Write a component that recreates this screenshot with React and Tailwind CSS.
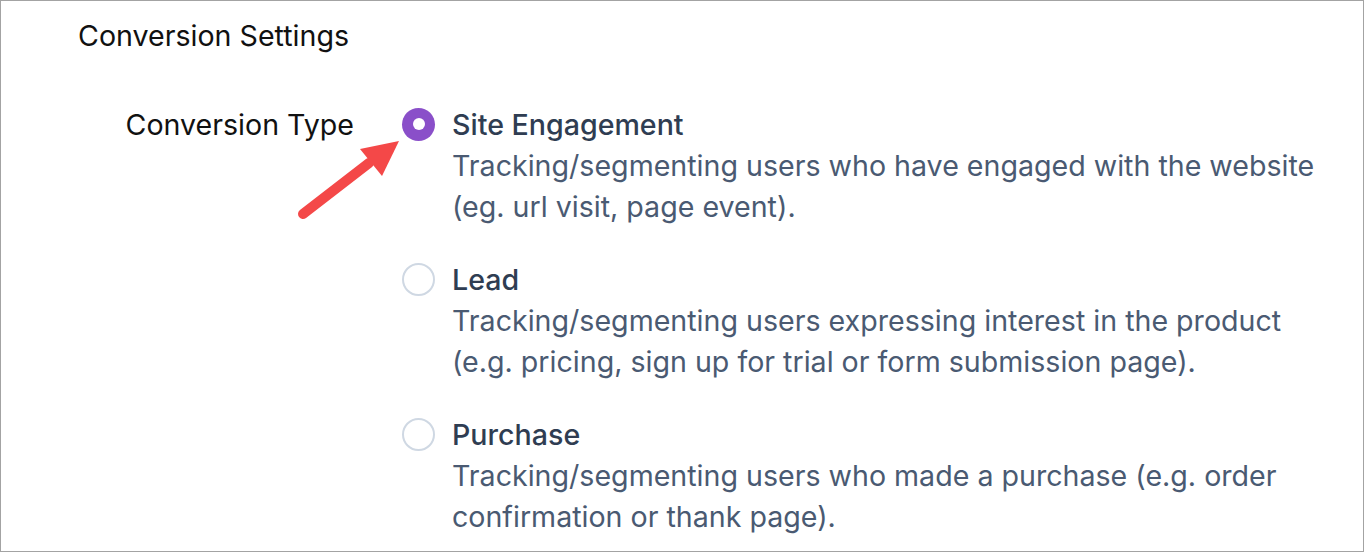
const options = [
  {
    id: "engagement",
    title: "Site Engagement",
    lines: [
      "Tracking/segmenting users who have engaged with the website",
      "(eg. url visit, page event).",
    ],
  },
  {
    id: "lead",
    title: "Lead",
    lines: [
      "Tracking/segmenting users expressing interest in the product",
      "(e.g. pricing, sign up for trial or form submission page).",
    ],
  },
  {
    id: "purchase",
    title: "Purchase",
    lines: [
      "Tracking/segmenting users who made a purchase (e.g. order",
      "confirmation or thank page).",
    ],
  },
];

function Radio({ checked }) {
  return checked ? (
    <span className="flex items-center justify-center w-[33px] h-[33px] rounded-full bg-[#8a4fc9] shrink-0">
      <span className="w-[12px] h-[12px] rounded-full bg-white" />
    </span>
  ) : (
    <span className="w-[33px] h-[33px] rounded-full border-2 border-[#cfd8e3] bg-white shrink-0" />
  );
}

function Arrow() {
  return (
    <svg className="absolute left-0 top-0 pointer-events-none" width="1364" height="552">
      <line x1="302" y1="213" x2="368" y2="162" stroke="#f44848" strokeWidth="10" strokeLinecap="round" />
      <polygon points="398,140 359,148 381,175" fill="#f44848" />
    </svg>
  );
}

export default function App() {
  const selected = "engagement";
  return (
    <div className="relative w-[1364px] h-[552px] border border-[#a3a3a3] bg-white font-['Inter',sans-serif] text-[28.6px] leading-[41px] overflow-hidden">
      <div className="pl-[77px] pt-[14px]">
        <h2 className="text-[#111111] font-normal">Conversion Settings</h2>

        <div className="flex mt-[47.5px]">
          <div className="w-[276px] text-right text-[#111111]">Conversion Type</div>
          <div className="ml-[48px] flex flex-col gap-[32px]">
            {options.map(opt => (
              <label key={opt.id} className="flex items-start">
                <span className="h-[41px] flex items-center">
                  <Radio checked={opt.id === selected} />
                </span>
                <span className="ml-[17px] flex flex-col">
                  <span className="text-[#2f3d52] font-medium">{opt.title}</span>
                  {opt.lines.map(line => (
                    <span key={line} className="text-[#4a5a72]">{line}</span>
                  ))}
                </span>
              </label>
            ))}
          </div>
        </div>
      </div>
      <Arrow />
    </div>
  );
}
